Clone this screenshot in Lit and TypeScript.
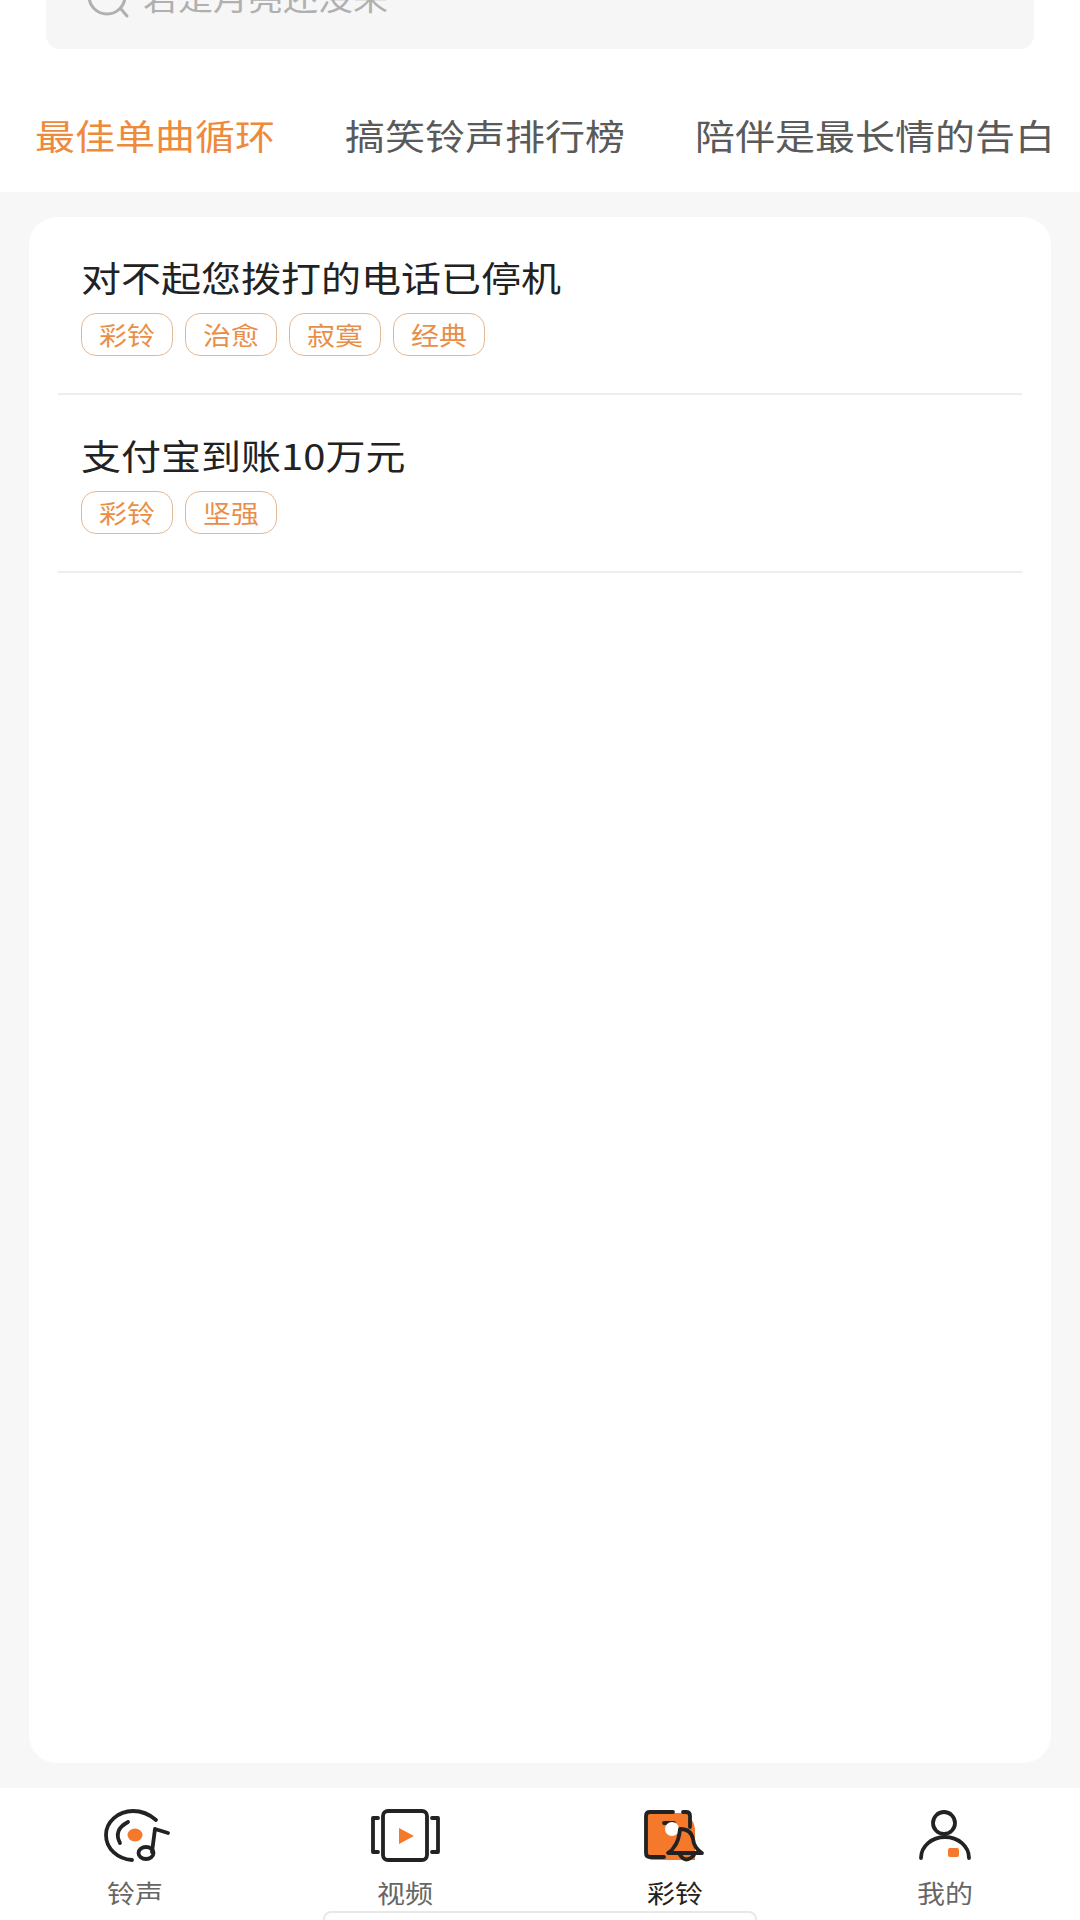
import { LitElement, html, css, svg } from "lit";
import { customElement } from "lit/decorators.js";

const rows = [
  { title: "对不起您拨打的电话已停机", tags: ["彩铃", "治愈", "寂寞", "经典"] },
  { title: "支付宝到账10万元", tags: ["彩铃", "坚强"] },
];
const tabs = ["最佳单曲循环", "搞笑铃声排行榜", "陪伴是最长情的告白"];

const icons = {
  ring: svg`<path d="M66 15C58 8 51 6 43 6C28 6 16 17 16 30C16 44 28 54 42 55" /><path d="M38 17Q23 25 30 38" />
    <ellipse class="of" cx="45" cy="30" rx="7.5" ry="6.5" />
    <path d="M65 24L62 47M65 24L78 28" /><ellipse cx="56" cy="48" rx="7.5" ry="6" />`,
  video: svg`<rect x="23" y="6" width="44" height="49" rx="5" />
    <path d="M18 13H13V47H18M72 13H78V47H72" />
    <path class="of" d="M39 23L54 31L39 39Z" />`,
  bell: svg`<path class="of" d="M17 8H58V12Q64 15 65 24V55H22Q16 54 16 48Z" />
    <path d="M43 7H20Q16 7 16 11V48Q16 52 20 52H34M60 22V11Q60 7 56 7H53" />
    <path d="M34 18H44" />
    <circle cx="42" cy="24" r="7" class="wf" />
    <path d="M38 48H72Q64 43 63 34Q61 24 50 24Q49 36 44 42Q42 46 38 48Z" />
    <path d="M50 50Q56 59 64 50" />`,
  me: svg`<circle cx="44" cy="18" r="11" />
    <path d="M21 53A24 21 0 0 1 69 53" />
    <rect class="of" x="48" y="43" width="11" height="9" rx="2" />`,
};

const nav = [
  { label: "铃声", icon: icons.ring },
  { label: "视频", icon: icons.video },
  { label: "彩铃", icon: icons.bell, active: true },
  { label: "我的", icon: icons.me },
];

@customElement("app-root")
export class AppRoot extends LitElement {
  static styles = css`
    :host {
      display: flex;
      flex-direction: column;
      position: relative;
      width: 1080px;
      height: 1920px;
      overflow: hidden;
      background: #fff;
      font-family: "Noto Sans CJK SC", "Noto Sans", sans-serif;
    }
    .squash {
      display: inline-block;
      transform: scaleY(0.875);
      white-space: nowrap;
    }
    .search {
      flex: none;
      display: flex;
      align-items: center;
      gap: 11px;
      height: 89px;
      margin: -40px 46px 0;
      padding: 0 40px 16px 40px;
      box-sizing: border-box;
      background: #f6f6f6;
      border-radius: 14px;
      color: #b0b0b0;
      font-size: 35px;
      line-height: 40px;
    }
    .search svg {
      flex: none;
      margin-top: 2px;
    }
    .tabs {
      flex: none;
      display: flex;
      gap: 70px;
      height: 143px;
      padding: 28px 0 0 35px;
      align-items: center;
      box-sizing: border-box;
      font-size: 40px;
      line-height: 50px;
      color: #5a5a5a;
    }
    .tabs .on {
      color: #ee8a3c;
    }
    main {
      flex: 1;
      min-height: 0;
      display: flex;
      padding: 25px 29px;
      background: #f7f7f7;
    }
    .card {
      flex: 1;
      padding: 0 29px;
      background: #fff;
      border-radius: 28px;
    }
    .row {
      height: 178px;
      box-sizing: border-box;
      padding: 35px 0 0 23px;
      border-bottom: 2px solid #eeeeee;
    }
    .title {
      font-size: 40px;
      line-height: 50px;
      color: #222;
    }
    .tags {
      display: flex;
      gap: 12px;
      margin-top: 11px;
    }
    .tag {
      width: 92px;
      height: 43px;
      box-sizing: border-box;
      display: flex;
      align-items: center;
      justify-content: center;
      padding-bottom: 2px;
      border: 1.5px solid #e6b892;
      border-radius: 15px;
      font-size: 28px;
      line-height: 28px;
      color: #e98e48;
    }
    nav {
      flex: none;
      display: grid;
      grid-template-columns: repeat(4, 1fr);
      height: 132px;
      background: #fff;
    }
    .item {
      display: flex;
      flex-direction: column;
      align-items: center;
      padding-top: 17px;
      font-size: 28px;
      line-height: 36px;
      color: #666;
    }
    .item.on {
      color: #222;
    }
    .item svg {
      display: block;
      margin-bottom: 9px;
      fill: none;
      stroke: #222;
      stroke-width: 3.8;
      stroke-linecap: round;
      stroke-linejoin: round;
    }
    .item svg .of {
      fill: #f5792a;
      stroke: none;
    }
    .item svg .wf {
      fill: #fff;
      stroke: none;
    }
    .home {
      position: absolute;
      left: 323px;
      width: 434px;
      top: 1911px;
      height: 16px;
      box-sizing: border-box;
      background: #fff;
      border: 2px solid #e8e8e8;
      border-radius: 8px;
    }
  `;

  render() {
    return html`
      <div class="search">
        <svg width="46" height="46" viewBox="0 0 46 46" fill="none" stroke="#b0b0b0" stroke-width="3" stroke-linecap="round">
          <circle cx="21" cy="21" r="18" /><path d="M35 34L41 41" />
        </svg>
        <span class="squash">若是月亮还没来</span>
      </div>
      <div class="tabs">
        ${tabs.map((t, i) => html`<span class="squash ${i === 0 ? "on" : ""}">${t}</span>`)}
      </div>
      <main>
        <div class="card">
          ${rows.map(
            (r) => html`<div class="row">
              <div class="title"><span class="squash">${r.title}</span></div>
              <div class="tags">
                ${r.tags.map((t) => html`<div class="tag"><span class="squash">${t}</span></div>`)}
              </div>
            </div>`
          )}
        </div>
      </main>
      <nav>
        ${nav.map(
          (n) => html`<div class="item ${n.active ? "on" : ""}">
            <svg width="90" height="60" viewBox="0 0 90 60">${n.icon}</svg>
            <span class="squash">${n.label}</span>
          </div>`
        )}
      </nav>
      <div class="home"></div>
    `;
  }
}
